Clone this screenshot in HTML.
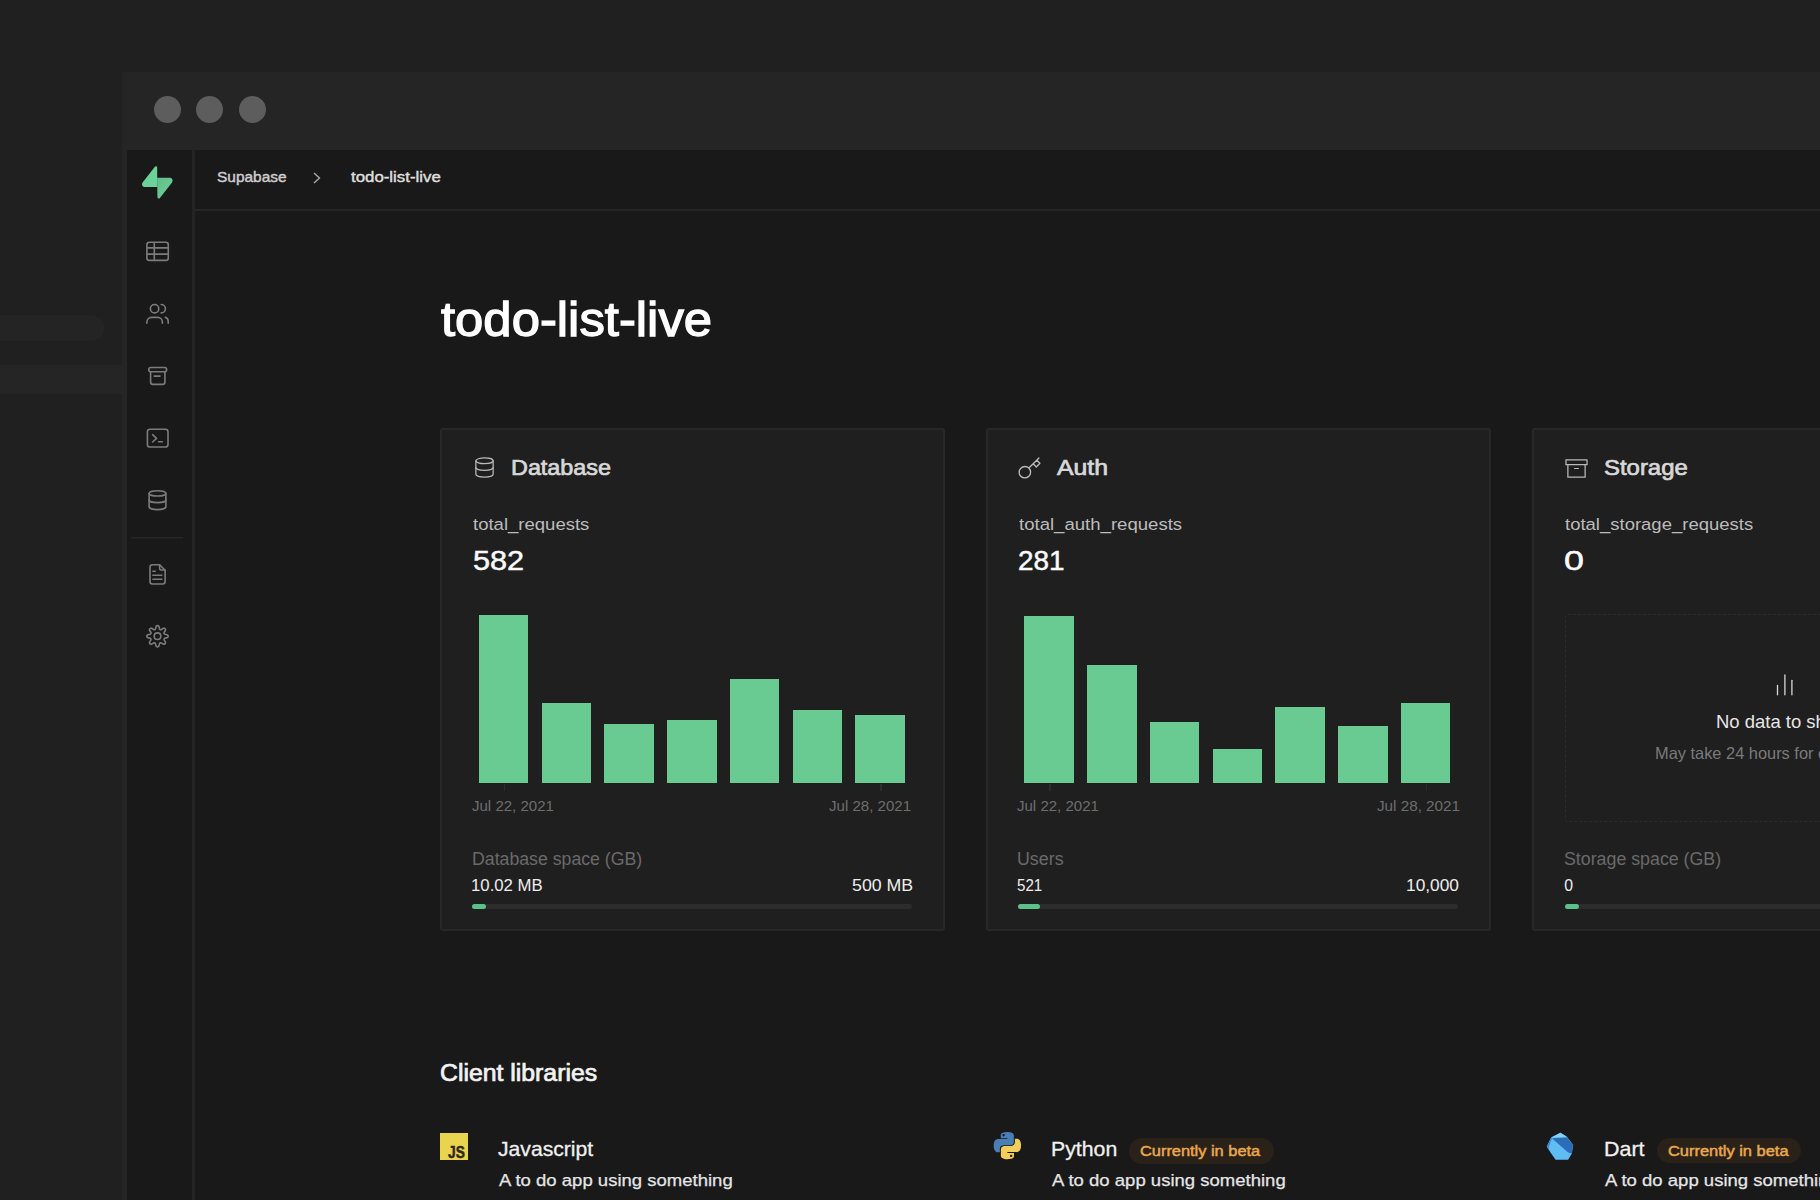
<!DOCTYPE html>
<html><head><meta charset="utf-8">
<style>
html,body{margin:0;padding:0;}
body{width:1820px;height:1200px;overflow:hidden;position:relative;background:#202020;font-family:"Liberation Sans",sans-serif;}
.a{position:absolute;}
.t{position:absolute;line-height:1;white-space:nowrap;font-family:"Liberation Sans",sans-serif;}
.b{font-weight:bold;}
.card{position:absolute;top:428px;width:501px;height:499px;background:#1f1f1f;border:2px solid #282828;border-radius:3px;}
.bar{position:absolute;width:49.6px;background:#6acb92;}
.track{position:absolute;height:5px;border-radius:3px;background:#2c2c2c;}
.fill{position:absolute;left:0;top:0;height:5px;border-radius:3px;background:#5cc08a;}
svg{position:absolute;display:block;overflow:visible;}
.ic{fill:none;stroke:#7c7c7c;stroke-width:1.6;stroke-linecap:round;stroke-linejoin:round;}
.ci{fill:none;stroke:#bababa;stroke-width:1.3;stroke-linecap:round;stroke-linejoin:round;}
</style></head><body>
<div class="a" style="left:0;top:315px;width:104px;height:26px;background:#242424;border-radius:0 13px 13px 0;"></div>
<div class="a" style="left:0;top:365px;width:122px;height:29px;background:#252525;"></div>
<div class="a" style="left:121.5px;top:71.5px;width:1700px;height:1140px;background:#252525;"></div>
<div class="a" style="left:127px;top:150px;width:1700px;height:1060px;background:#191919;"></div>
<div class="a" style="left:192.3px;top:150px;width:2.7px;height:1060px;background:#242424;"></div>
<div class="a" style="left:195px;top:209px;width:1630px;height:1.8px;background:#262626;"></div>
<div class="a" style="left:153.5px;top:95.5px;width:27px;height:27px;border-radius:50%;background:#5d5d5d;"></div>
<div class="a" style="left:196px;top:95.5px;width:27px;height:27px;border-radius:50%;background:#5d5d5d;"></div>
<div class="a" style="left:238.5px;top:95.5px;width:27px;height:27px;border-radius:50%;background:#5d5d5d;"></div>
<!-- SIDEBAR -->
<svg style="left:0;top:0" width="200" height="700" viewBox="0 0 200 700">
<defs><linearGradient id="lg1" x1="0" y1="0" x2="1" y2="1"><stop offset="0" stop-color="#5fbf88"/><stop offset="1" stop-color="#72d09a"/></linearGradient></defs>
<g transform="translate(142,166.3) scale(0.2806,0.2876)">
<path d="M63.7076 110.284C60.8481 113.885 55.0502 111.912 54.9813 107.314L53.9738 40.0627L99.1935 40.0627C107.384 40.0627 111.952 49.5228 106.859 55.9374L63.7076 110.284Z" fill="url(#lg1)"/>
<path d="M45.317 2.07103C48.1765 -1.53037 53.9745 0.442937 54.0434 5.041L54.4849 72.2922H9.83113C1.64038 72.2922 -2.92775 62.8321 2.1655 56.4175L45.317 2.07103Z" fill="#6dd19a"/>
</g>
<g class="ic">
<rect x="146.9" y="242.2" width="21.4" height="18.2" rx="2.5"/>
<line x1="147.5" y1="247.9" x2="167.7" y2="247.9"/><line x1="147.5" y1="254.1" x2="167.7" y2="254.1"/><line x1="154.3" y1="243" x2="154.3" y2="259.6"/>
<circle cx="154.6" cy="308.7" r="4.2"/>
<path d="M161.2 304.5A4.2 4.2 0 0 1 161.2 312.9"/>
<path d="M146.9 323.2V322A4.6 4.6 0 0 1 151.5 317.4H157.8A4.6 4.6 0 0 1 162.4 322V323.2"/>
<path d="M165.3 317.2A4.3 4.3 0 0 1 168.2 321.3V323.2"/>
<rect x="148.8" y="367.5" width="17.8" height="4.3" rx="2"/>
<path d="M150.6 371.8V382A2.4 2.4 0 0 0 153 384.4H162.5A2.4 2.4 0 0 0 164.9 382V371.8"/>
<line x1="154.2" y1="376.1" x2="160" y2="376.1"/>
<rect x="147.4" y="429.2" width="20.6" height="17.8" rx="2.6"/>
<polyline points="152.6,434.6 156.6,438.3 152.6,442"/>
<line x1="158.6" y1="441.7" x2="162.4" y2="441.7"/>
<ellipse cx="157.5" cy="493.4" rx="8.4" ry="2.6"/>
<path d="M149.1 493.4V506.8C149.1 508.3 152.8 509.6 157.5 509.6S165.9 508.3 165.9 506.8V493.4"/>
<path d="M149.1 499.9C149.1 501.4 152.8 502.6 157.5 502.6S165.9 501.4 165.9 499.9"/>
<path d="M152.4 564.7H159.6L165.1 570.2V581.6A2.4 2.4 0 0 1 162.7 584H152.4A2.4 2.4 0 0 1 150 581.6V567.1A2.4 2.4 0 0 1 152.4 564.7Z"/>
<path d="M159.6 564.9V568.4A1.6 1.6 0 0 0 161.2 570H164.9"/>
<line x1="152.9" y1="571.3" x2="155.2" y2="571.3"/><line x1="152.9" y1="575.3" x2="161.8" y2="575.3"/><line x1="152.9" y1="579.2" x2="161.8" y2="579.2"/>
<path d="M168.2 636.2 L168.0 636.9 L167.5 637.5 L166.2 637.9 L164.9 638.2 L164.4 638.5 L164.1 638.9 L164.0 639.4 L164.2 640.1 L164.9 641.1 L165.5 642.3 L165.4 643.2 L165.1 643.8 L164.5 644.1 L163.6 644.2 L162.4 643.6 L161.4 642.9 L160.7 642.7 L160.2 642.8 L159.8 643.1 L159.5 643.6 L159.2 644.9 L158.8 646.2 L158.2 646.7 L157.5 646.9 L156.8 646.7 L156.2 646.2 L155.8 644.9 L155.5 643.6 L155.2 643.1 L154.8 642.8 L154.3 642.7 L153.6 642.9 L152.6 643.6 L151.4 644.2 L150.5 644.1 L149.9 643.8 L149.6 643.2 L149.5 642.3 L150.1 641.1 L150.8 640.1 L151.0 639.4 L150.9 638.9 L150.6 638.5 L150.1 638.2 L148.8 637.9 L147.5 637.5 L147.0 636.9 L146.8 636.2 L147.0 635.5 L147.5 634.9 L148.8 634.5 L150.1 634.2 L150.6 633.9 L150.9 633.5 L151.0 633.0 L150.8 632.3 L150.1 631.3 L149.5 630.1 L149.6 629.2 L149.9 628.6 L150.5 628.3 L151.4 628.2 L152.6 628.8 L153.6 629.5 L154.3 629.7 L154.8 629.6 L155.2 629.3 L155.5 628.8 L155.8 627.5 L156.2 626.2 L156.8 625.7 L157.5 625.5 L158.2 625.7 L158.8 626.2 L159.2 627.5 L159.5 628.8 L159.8 629.3 L160.2 629.6 L160.7 629.7 L161.4 629.5 L162.4 628.8 L163.6 628.2 L164.5 628.3 L165.1 628.6 L165.4 629.2 L165.5 630.1 L164.9 631.3 L164.2 632.3 L164.0 633.0 L164.1 633.5 L164.4 633.9 L164.9 634.2 L166.2 634.5 L167.5 634.9 L168.0 635.5Z"/>
<circle cx="157.5" cy="636.2" r="3.3"/>
</g>
<line x1="131" y1="537.8" x2="183" y2="537.8" stroke="#262626" stroke-width="1.5"/>
</svg>
<!-- SIDEBAR_END -->
<div class="t" style="left:216.53px;top:169.48px;font-size:15.2px;color:#cdcdcd;letter-spacing:0.000px;-webkit-text-stroke:0.45px #cdcdcd;transform:scaleX(1.0170);transform-origin:0 0;">Supabase</div>
<svg style="left:309px;top:170px" width="16" height="16" viewBox="0 0 16 16"><polyline points="5,3 10.5,8 5,13" fill="none" stroke="#aaa" stroke-width="1.4"/></svg>
<div class="t" style="left:351.37px;top:169.48px;font-size:15.2px;color:#dedede;letter-spacing:0.000px;-webkit-text-stroke:0.45px #dedede;transform:scaleX(1.1076);transform-origin:0 0;">todo-list-live</div>
<div class="t" style="left:440.59px;top:295.71px;font-size:47.4px;color:#ffffff;letter-spacing:0.000px;-webkit-text-stroke:1.3px #ffffff;transform:scaleX(1.0721);transform-origin:0 0;">todo-list-live</div>
<div class="card" style="left:440px;"></div>
<div class="card" style="left:986px;"></div>
<div class="card" style="left:1532px;"></div>
<div class="t" style="left:511.32px;top:456.70px;font-size:22px;color:#d8d8d8;letter-spacing:0.000px;-webkit-text-stroke:0.7px #d8d8d8;transform:scaleX(1.0622);transform-origin:0 0;">Database</div>
<div class="t" style="left:1057.39px;top:456.70px;font-size:22px;color:#d8d8d8;letter-spacing:0.000px;-webkit-text-stroke:0.7px #d8d8d8;transform:scaleX(1.1275);transform-origin:0 0;">Auth</div>
<div class="t" style="left:1604.17px;top:456.70px;font-size:22px;color:#d8d8d8;letter-spacing:0.000px;-webkit-text-stroke:0.7px #d8d8d8;transform:scaleX(1.0874);transform-origin:0 0;">Storage</div>
<div class="t" style="left:473.02px;top:515.97px;font-size:17.1px;color:#bcbcbc;letter-spacing:0.000px;transform:scaleX(1.0837);transform-origin:0 0;">total_requests</div>
<div class="t" style="left:1018.82px;top:515.97px;font-size:17.1px;color:#bcbcbc;letter-spacing:0.000px;transform:scaleX(1.0866);transform-origin:0 0;">total_auth_requests</div>
<div class="t" style="left:1564.52px;top:515.97px;font-size:17.1px;color:#bcbcbc;letter-spacing:0.000px;transform:scaleX(1.0821);transform-origin:0 0;">total_storage_requests</div>
<div class="t" style="left:472.52px;top:546.26px;font-size:28.4px;color:#fafafa;letter-spacing:0.000px;-webkit-text-stroke:0.5px #fafafa;transform:scaleX(1.0803);transform-origin:0 0;">582</div>
<div class="t" style="left:1017.96px;top:546.26px;font-size:28.4px;color:#fafafa;letter-spacing:0.000px;-webkit-text-stroke:0.5px #fafafa;transform:scaleX(0.9823);transform-origin:0 0;">281</div>
<div class="t" style="left:1563.82px;top:546.26px;font-size:28.4px;color:#fafafa;letter-spacing:0.000px;-webkit-text-stroke:0.5px #fafafa;transform:scaleX(1.2610);transform-origin:0 0;">0</div>
<div class="bar" style="left:478.8px;top:615.3px;height:167.7px;"></div>
<div class="bar" style="left:541.5px;top:702.6px;height:80.4px;"></div>
<div class="bar" style="left:604.3px;top:723.7px;height:59.3px;"></div>
<div class="bar" style="left:667.0px;top:720.3px;height:62.7px;"></div>
<div class="bar" style="left:729.8px;top:678.6px;height:104.4px;"></div>
<div class="bar" style="left:792.5px;top:709.8px;height:73.2px;"></div>
<div class="bar" style="left:855.2px;top:715.3px;height:67.7px;"></div>
<div class="bar" style="left:1024.4px;top:616.3px;height:166.7px;"></div>
<div class="bar" style="left:1087.1px;top:664.8px;height:118.2px;"></div>
<div class="bar" style="left:1149.9px;top:721.7px;height:61.3px;"></div>
<div class="bar" style="left:1212.6px;top:749.1px;height:33.9px;"></div>
<div class="bar" style="left:1275.4px;top:707.0px;height:76.0px;"></div>
<div class="bar" style="left:1338.1px;top:725.6px;height:57.4px;"></div>
<div class="bar" style="left:1400.8px;top:702.5px;height:80.5px;"></div>
<div class="a" style="left:503.9px;top:784px;width:1.3px;height:7px;background:#2d2d2d;"></div>
<div class="a" style="left:880.3px;top:784px;width:1.3px;height:7px;background:#2d2d2d;"></div>
<div class="a" style="left:1049.4px;top:784px;width:1.3px;height:7px;background:#2d2d2d;"></div>
<div class="a" style="left:1425.8px;top:784px;width:1.3px;height:7px;background:#2d2d2d;"></div>
<div class="t" style="left:472.47px;top:799.10px;font-size:14px;color:#6e6e6e;letter-spacing:0.000px;transform:scaleX(1.0731);transform-origin:0 0;">Jul 22, 2021</div>
<div class="t" style="left:829.47px;top:799.10px;font-size:14px;color:#6e6e6e;letter-spacing:0.000px;transform:scaleX(1.0757);transform-origin:0 0;">Jul 28, 2021</div>
<div class="t" style="left:1017.47px;top:799.10px;font-size:14px;color:#6e6e6e;letter-spacing:0.000px;transform:scaleX(1.0731);transform-origin:0 0;">Jul 22, 2021</div>
<div class="t" style="left:1377.07px;top:799.10px;font-size:14px;color:#6e6e6e;letter-spacing:0.000px;transform:scaleX(1.0877);transform-origin:0 0;">Jul 28, 2021</div>
<div class="t" style="left:471.54px;top:850.25px;font-size:18.3px;color:#6a6a6a;letter-spacing:0.000px;transform:scaleX(0.9683);transform-origin:0 0;">Database space (GB)</div>
<div class="t" style="left:1016.92px;top:850.25px;font-size:18.3px;color:#6a6a6a;letter-spacing:0.000px;transform:scaleX(0.9749);transform-origin:0 0;">Users</div>
<div class="t" style="left:1564.10px;top:850.25px;font-size:18.3px;color:#6a6a6a;letter-spacing:0.000px;transform:scaleX(0.9727);transform-origin:0 0;">Storage space (GB)</div>
<div class="t" style="left:471.04px;top:878.17px;font-size:15.8px;color:#eeeeee;letter-spacing:0.000px;transform:scaleX(1.0608);transform-origin:0 0;">10.02 MB</div>
<div class="t" style="left:851.59px;top:878.17px;font-size:15.8px;color:#eeeeee;letter-spacing:0.000px;transform:scaleX(1.1243);transform-origin:0 0;">500 MB</div>
<div class="t" style="left:1017.39px;top:878.17px;font-size:15.8px;color:#eeeeee;letter-spacing:0.000px;transform:scaleX(0.9574);transform-origin:0 0;">521</div>
<div class="t" style="left:1405.70px;top:878.17px;font-size:15.8px;color:#eeeeee;letter-spacing:0.000px;transform:scaleX(1.0960);transform-origin:0 0;">10,000</div>
<div class="t" style="left:1564.37px;top:878.17px;font-size:15.8px;color:#eeeeee;letter-spacing:0.000px;">0</div>
<div class="track" style="left:472.3px;top:903.5px;width:439.6px;"><div class="fill" style="width:13.5px;"></div></div>
<div class="track" style="left:1018px;top:903.5px;width:440px;"><div class="fill" style="width:22.2px;"></div></div>
<div class="track" style="left:1565px;top:903.5px;width:440px;"><div class="fill" style="width:13.5px;"></div></div>
<div class="a" style="left:1565px;top:614px;width:438px;height:206px;border:1.5px dashed #2c2c2c;border-radius:3px;"></div>
<svg style="left:1770px;top:672px" width="30" height="26" viewBox="1770 672 30 26"><g stroke="#d8d8d8" stroke-width="1.3" stroke-linecap="round"><line x1="1777.5" y1="685.5" x2="1777.5" y2="694.8"/><line x1="1784.9" y1="675" x2="1784.9" y2="694.8"/><line x1="1791.9" y1="680.3" x2="1791.9" y2="694.8"/></g></svg>
<div class="t" style="left:1716.48px;top:713.12px;font-size:18.1px;color:#e6e6e6;letter-spacing:0.000px;transform:scaleX(1.0203);transform-origin:0 0;">No data to show</div>
<div class="t" style="left:1655.35px;top:744.73px;font-size:16.5px;color:#7a7a7a;letter-spacing:0.000px;transform:scaleX(0.9929);transform-origin:0 0;">May take 24 hours for data to show</div>
<svg class="ci" style="left:472.9px;top:456.4px" width="23" height="23" viewBox="0 0 24 24"><ellipse cx="12" cy="5" rx="9" ry="3"/><path d="M21 12c0 1.66-4 3-9 3s-9-1.34-9-3"/><path d="M3 5v14c0 1.66 4 3 9 3s9-1.34 9-3V5"/></svg>
<svg class="ci" style="left:1017px;top:455.5px" width="25" height="25" viewBox="0 0 24 24"><path d="M21 2l-2 2m-7.61 7.61a5.5 5.5 0 1 1-7.778 7.778 5.5 5.5 0 0 1 7.777-7.777zm0 0L15.5 7.5m0 0l3 3L22 7l-3-3m-3.5 3.5L19 4"/></svg>
<svg class="ci" style="left:1565.1px;top:456.8px" width="23" height="23" viewBox="0 0 24 24"><polyline points="21 8 21 21 3 21 3 8"/><rect x="1" y="3" width="22" height="5"/><line x1="10" y1="12" x2="14" y2="12"/></svg>
<div class="t" style="left:439.61px;top:1061.75px;font-size:23px;color:#f2f2f2;letter-spacing:0.000px;-webkit-text-stroke:0.7px #f2f2f2;transform:scaleX(1.0783);transform-origin:0 0;">Client libraries</div>
<div class="a" style="left:440px;top:1132.6px;width:28px;height:27.4px;background:#e9d44f;"></div>
<svg style="left:440px;top:1132.6px" width="28" height="27.4" viewBox="0 0 28 27.4"><text x="8" y="25.3" font-family="Liberation Sans" font-weight="bold" font-size="17" textLength="16.8" lengthAdjust="spacingAndGlyphs" fill="#2b2a1c" stroke="#2b2a1c" stroke-width="0.5">JS</text></svg>
<div class="t" style="left:498.43px;top:1139.06px;font-size:20.4px;color:#f0f0f0;letter-spacing:0.000px;-webkit-text-stroke:0.3px #f0f0f0;transform:scaleX(1.0368);transform-origin:0 0;">Javascript</div>
<div class="t" style="left:498.68px;top:1172.48px;font-size:17.2px;color:#e6e6e6;letter-spacing:0.000px;-webkit-text-stroke:0.25px #e6e6e6;transform:scaleX(1.0774);transform-origin:0 0;">A to do app using something</div>
<svg style="left:993px;top:1132.4px" width="28.6" height="27.2" viewBox="0 0 110 110">
<path d="M54.9 0C26.8 0 28.6 12.2 28.6 12.2l.03 12.6h26.8v3.8H17.9S0 26.6 0 55c0 28.4 15.6 27.4 15.6 27.4h9.3V69.2s-.5-15.6 15.4-15.6h26.5s14.9.2 14.9-14.4V15.1S84 0 54.9 0zM40.1 8.5c2.7 0 4.8 2.2 4.8 4.8 0 2.7-2.2 4.8-4.8 4.8-2.7 0-4.8-2.2-4.8-4.8 0-2.7 2.2-4.8 4.8-4.8z" fill="#4a7fb5"/>
<path d="M55.7 110c28.1 0 26.3-12.2 26.3-12.2l-.03-12.6H55.2v-3.8h37.5S110.7 83.4 110.7 55c0-28.4-15.6-27.4-15.6-27.4h-9.3v13.2s.5 15.6-15.4 15.6H43.9s-14.9-.2-14.9 14.4v24.1S26.6 110 55.7 110zm14.8-8.5c-2.7 0-4.8-2.2-4.8-4.8 0-2.7 2.2-4.8 4.8-4.8 2.7 0 4.8 2.2 4.8 4.8 0 2.7-2.2 4.8-4.8 4.8z" fill="#f2cf5b"/>
</svg>
<div class="t" style="left:1050.99px;top:1138.96px;font-size:20.4px;color:#f0f0f0;letter-spacing:0.000px;-webkit-text-stroke:0.3px #f0f0f0;transform:scaleX(1.0432);transform-origin:0 0;">Python</div>
<div class="a" style="left:1129.2px;top:1138.2px;width:145px;height:25.5px;border-radius:13px;background:#2a2218;"></div>
<div class="t" style="left:1140.23px;top:1143.12px;font-size:15.5px;color:#e9a84f;letter-spacing:0.000px;-webkit-text-stroke:0.5px #e9a84f;transform:scaleX(1.0565);transform-origin:0 0;">Currently in beta</div>
<div class="t" style="left:1051.88px;top:1172.48px;font-size:17.2px;color:#e6e6e6;letter-spacing:0.000px;-webkit-text-stroke:0.25px #e6e6e6;transform:scaleX(1.0774);transform-origin:0 0;">A to do app using something</div>
<svg style="left:1542px;top:1129px" width="36" height="34" viewBox="0 0 36 34">
<polygon points="18.4,3.7 24.9,7.8 31.2,15.9 29.8,24.5 26.1,30.7 13.6,30.7 8.5,23.5 4.8,17.6 9.3,8.2" fill="#5fbdf4"/>
<polygon points="18.4,3.7 24.9,7.8 9.6,8.6" fill="#86cff8"/>
<polygon points="9.9,9.3 24.9,8.4 31.2,15.9 29.8,24.5 26.1,23.6" fill="#2c6db8"/>
<polygon points="9.3,8.2 4.8,17.6 6.2,20 9.9,9.3" fill="#3f86cf"/>
</svg>
<div class="t" style="left:1604.28px;top:1138.66px;font-size:20.4px;color:#f0f0f0;letter-spacing:0.000px;-webkit-text-stroke:0.3px #f0f0f0;transform:scaleX(1.0512);transform-origin:0 0;">Dart</div>
<div class="a" style="left:1656.8px;top:1138.4px;width:144.4px;height:24.6px;border-radius:13px;background:#2a2218;"></div>
<div class="t" style="left:1668.13px;top:1143.12px;font-size:15.5px;color:#e9a84f;letter-spacing:0.000px;-webkit-text-stroke:0.5px #e9a84f;transform:scaleX(1.0601);transform-origin:0 0;">Currently in beta</div>
<div class="t" style="left:1605.08px;top:1172.48px;font-size:17.2px;color:#e6e6e6;letter-spacing:0.000px;-webkit-text-stroke:0.25px #e6e6e6;transform:scaleX(1.0774);transform-origin:0 0;">A to do app using something</div>
</body></html>
